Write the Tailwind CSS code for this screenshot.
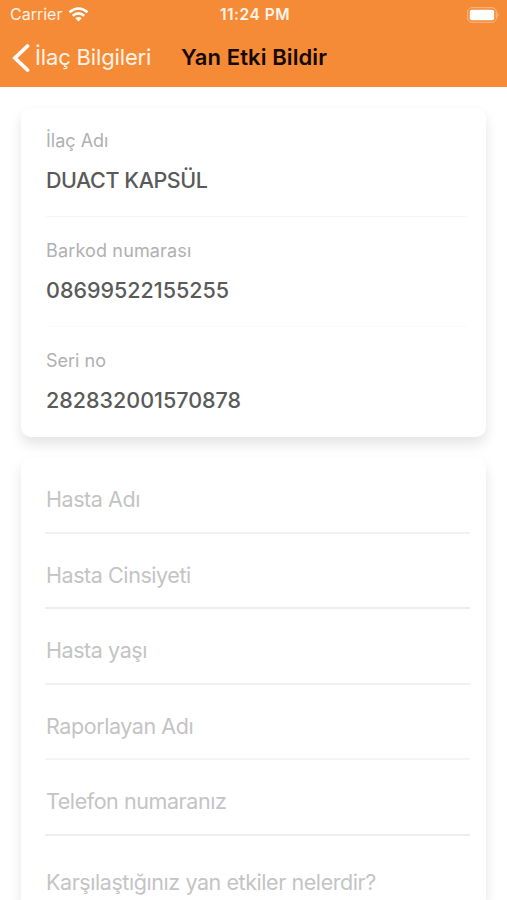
<!DOCTYPE html>
<html lang="tr"><head><meta charset="utf-8"><title>Yan Etki Bildir</title>
<script src="https://cdn.jsdelivr.net/npm/@tailwindcss/browser@4"></script></head>
<body class="bg-white font-['Inter',sans-serif] w-[507px] h-[900px] overflow-hidden">
<header class="h-[87px] bg-[#f58b37] text-[#fff3e8]">
<div class="h-[29px] grid grid-cols-3 items-center pl-[10px] pr-[7px] pb-px text-[16px]">
<div class="flex items-center gap-[6px] leading-[29px]"><span>Carrier</span>
<svg width="21" height="15" viewBox="0 0 20 15" fill="none" stroke="#fff" stroke-width="2.6"><path d="M1 5.3Q10 -2.3 19 5.3M4.2 8.8Q10 4 15.8 8.8"/><path d="M10 14.5L6.8 11.3Q10 8.7 13.2 11.3Z" fill="#fff" stroke="none"/></svg></div>
<div class="text-center font-semibold text-[15.5px] tracking-[0.5px] whitespace-nowrap leading-[29px]">11:24 PM</div>
<div class="justify-self-end"><svg width="33" height="16" viewBox="0 0 33 16"><rect x=".7" y=".7" width="28.6" height="14.6" rx="4.2" fill="none" stroke="#fff" stroke-opacity=".4"/><rect x="2.8" y="2.8" width="24.4" height="10.4" rx="2" fill="#fff"/><path d="M30.5 5.5Q32.8 8 30.5 10.5Z" fill="#fff" fill-opacity=".4"/></svg></div>
</div>
<div class="h-[57px] flex items-center pl-[12px] text-[22px]">
<svg width="18" height="30" viewBox="0 0 18 30" fill="none" stroke="#fff" stroke-width="3.8" stroke-linecap="round"><path d="M15.5 3L3 15L15.5 27"/></svg>
<span class="ml-[5px] w-[146px] whitespace-nowrap tracking-[-0.15px]">İlaç Bilgileri</span><span class="font-semibold text-[#140800] whitespace-nowrap tracking-[0.1px]">Yan Etki Bildir</span>
</div></header>
<main class="h-[813px] overflow-hidden px-[21px] pt-[21px] flex flex-col gap-[21px]">
<section class="h-[329px] shrink-0 rounded-[10px] bg-white shadow-[0_7px_13px_rgba(0,0,0,0.11)] pl-[25px] pr-[19px]">
<div class="h-[109px] pt-[20px] border-b border-[#f6f6f6]"><p class="text-[18px] leading-[26px] text-[#b0b0b0]">İlaç Adı</p><p class="mt-[12px] text-[21.5px] leading-[29px] font-medium tracking-[-0.45px] text-[#5a5a5a]">DUACT KAPSÜL</p></div>
<div class="h-[110px] pt-[21px] border-b border-[#fafafa]"><p class="text-[18px] leading-[26px] tracking-[0.15px] text-[#b0b0b0]">Barkod numarası</p><p class="mt-[12px] text-[21.5px] leading-[29px] font-medium text-[#5a5a5a]">08699522155255</p></div>
<div class="h-[110px] pt-[21px]"><p class="text-[18px] leading-[26px] text-[#b0b0b0]">Seri no</p><p class="mt-[12px] text-[21.5px] leading-[29px] font-medium text-[#5a5a5a]">282832001570878</p></div>
</section>
<section class="flex-1 rounded-t-[10px] bg-white shadow-[0_7px_13px_rgba(0,0,0,0.11)] pl-[24px] pr-[16px] text-[21.5px] tracking-[-0.43px] leading-[29px] text-[#c4c4c4]">
<div class="h-[76px] pl-px pt-[27px] border-b-2 border-[#f1f1f1]">Hasta Adı</div>
<div class="h-[75px] pl-px pt-[27px] border-b-2 border-[#eeeeee]">Hasta Cinsiyeti</div>
<div class="h-[76px] pl-px pt-[27px] border-b-2 border-[#f1f1f1]">Hasta yaşı</div>
<div class="h-[75px] pl-px pt-[27px] border-b-2 border-[#f4f4f4]">Raporlayan Adı</div>
<div class="h-[76px] pl-px pt-[27px] border-b-2 border-[#eeeeee]">Telefon numaranız</div>
<div class="pl-px pt-[32px] whitespace-nowrap">Karşılaştığınız yan etkiler nelerdir?</div>
</section></main>
</body></html>
